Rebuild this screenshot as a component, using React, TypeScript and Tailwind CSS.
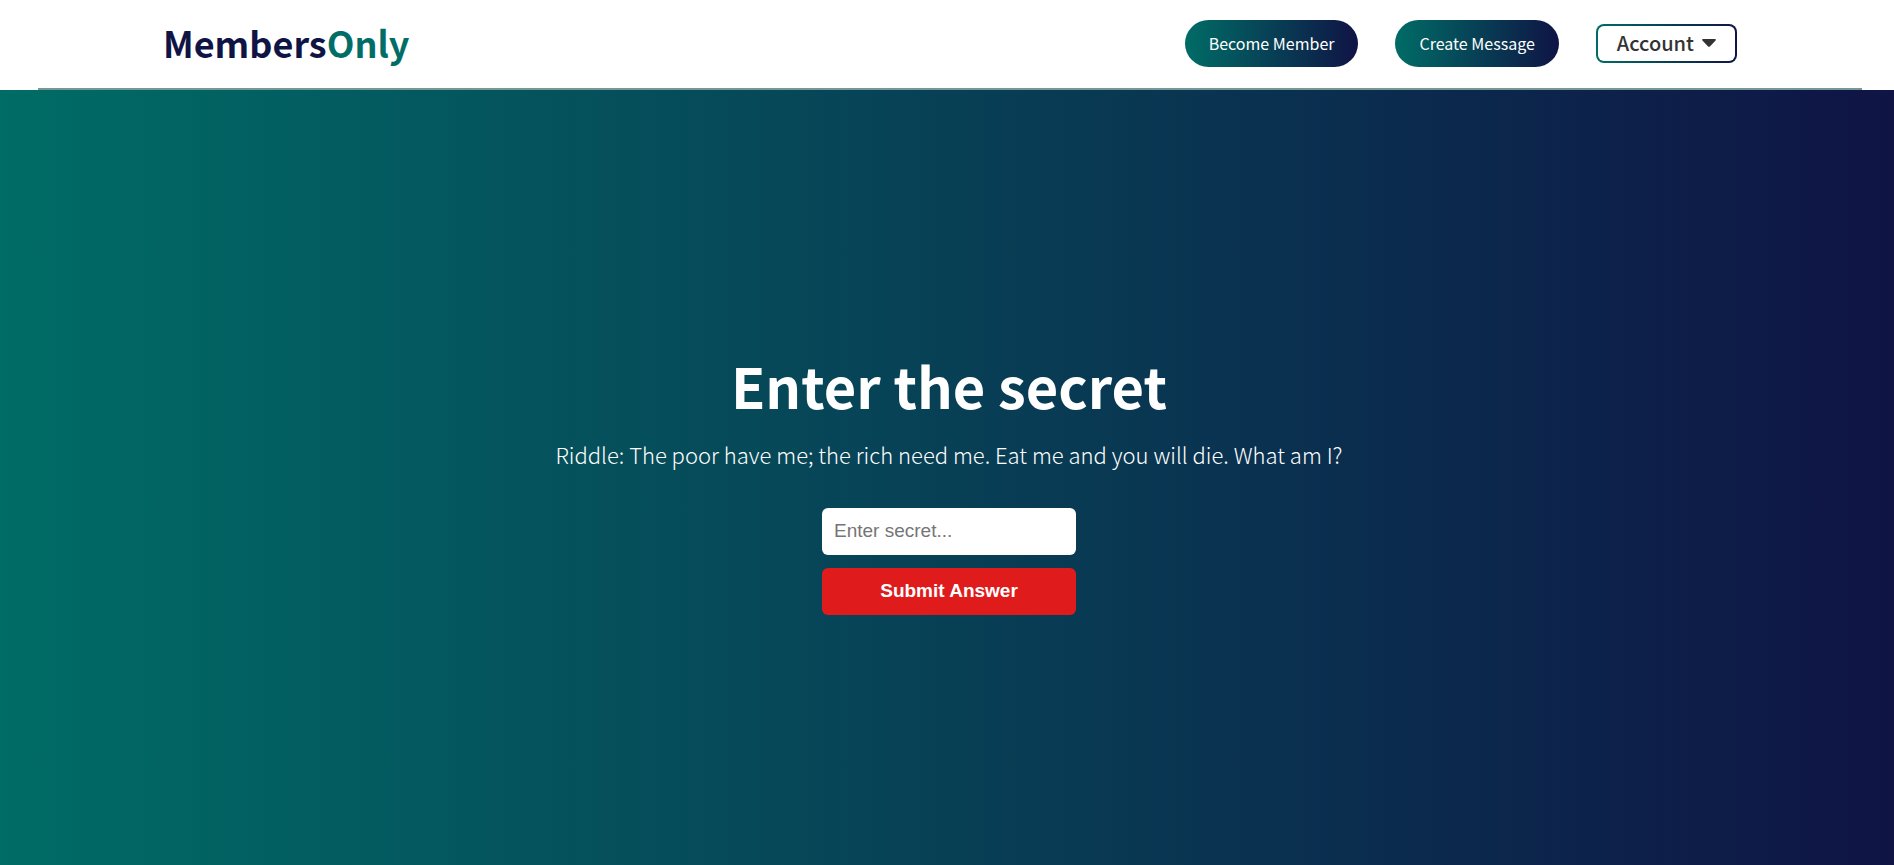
import { FormEvent } from "react";

function Logo() {
  return (
    <a href="#" className="pb-[2px] text-4xl leading-none font-bold text-[#0f1445]">
      Members<span className="text-[#006e66]">Only</span>
    </a>
  );
}

function PillLink({ label }: { label: string }) {
  return (
    <a
      href="#"
      className="flex h-[47px] items-center rounded-full bg-[linear-gradient(to_right,#006c66,#0f1445)] px-6 text-base text-white"
    >
      {label}
    </a>
  );
}

function AccountButton() {
  return (
    <button
      type="button"
      className="rounded-lg bg-[linear-gradient(to_right,#006c66,#0f1445)] p-[2px] text-xl font-medium text-[#333333]"
    >
      <span className="flex h-[35px] items-center gap-2 rounded-md bg-white px-[19px]">
        Account
        <svg viewBox="0 0 14 8" className="h-2 w-3.5" fill="currentColor" aria-hidden="true">
          <path d="M1 0h12c.8 0 1.200.8.6 1.400L7.900 7.400c-.5.600-1.300.600-1.800 0L.4 1.400C-.2.8.2 0 1 0z" />
        </svg>
      </span>
    </button>
  );
}

export default function App() {
  const handleSubmit = (event: FormEvent) => event.preventDefault();

  return (
    <div className="flex min-h-screen flex-col bg-white font-['Noto_Sans_CJK_JP',sans-serif]">
      <header>
        <nav className="flex h-[88px] items-center justify-between pr-[157px] pb-[2px] pl-[163px]">
          <Logo />
          <div className="flex items-center gap-[37px]">
            <PillLink label="Become Member" />
            <PillLink label="Create Message" />
            <AccountButton />
          </div>
        </nav>
        <hr className="mr-8 ml-[38px] h-[2px] border-0 bg-[#759992]" />
      </header>
      <main className="flex flex-1 flex-col items-center justify-center bg-[linear-gradient(to_right,#006c66,#0f1445)] pt-1 pl-1 text-white">
        <h1 className="text-[56px] leading-[80px] font-bold">Enter the secret</h1>
        <p className="mt-[11px] text-[22px] leading-9 font-light">
          Riddle: The poor have me; the rich need me. Eat me and you will die. What am I?
        </p>
        <form
          onSubmit={handleSubmit}
          className="mt-9 flex w-[254px] flex-col gap-[13px] font-['Liberation_Sans',Arial,sans-serif] text-[19px]"
        >
          <input
            type="text"
            aria-label="Secret"
            placeholder="Enter secret..."
            className="h-[47px] rounded-md bg-white px-3 text-black placeholder:text-[#757575]"
          />
          <button type="submit" className="h-[47px] rounded-md bg-[#df1b1b] font-bold text-white">
            Submit Answer
          </button>
        </form>
      </main>
    </div>
  );
}
